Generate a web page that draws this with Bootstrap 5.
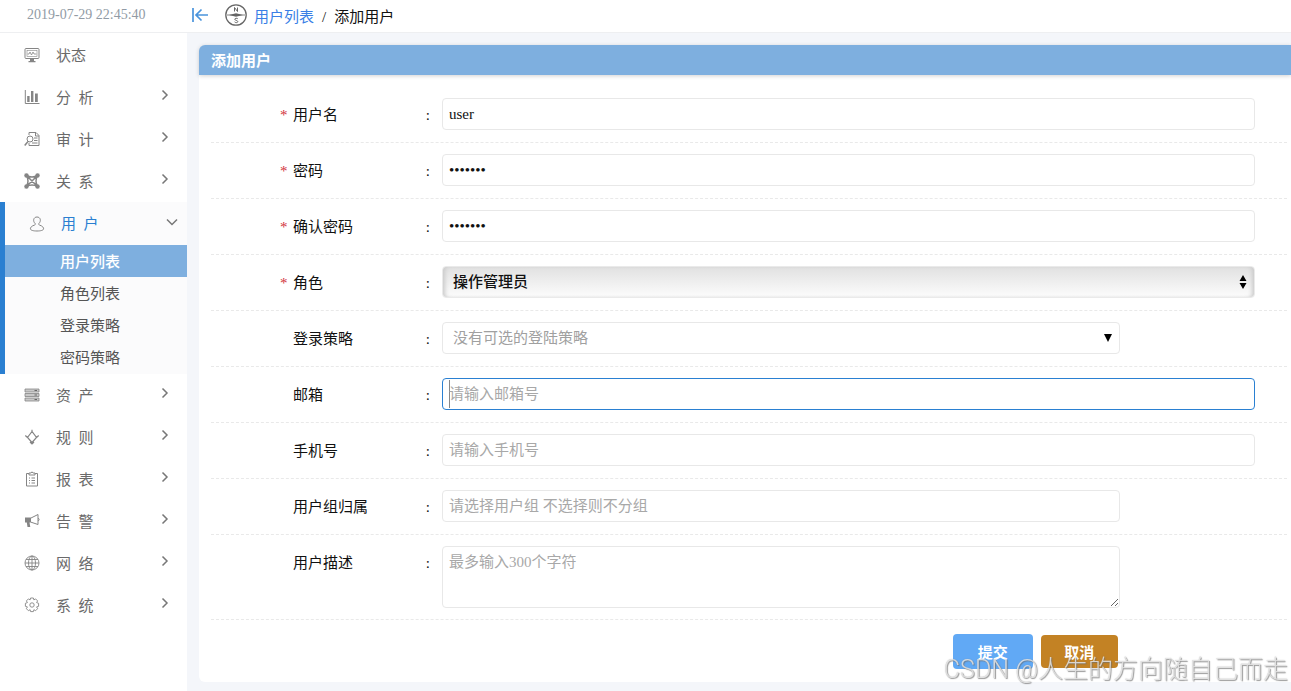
<!DOCTYPE html>
<html lang="zh-CN">
<head>
<meta charset="utf-8">
<meta name="viewport" content="width=device-width, initial-scale=1">
<title>添加用户</title>
<link href="https://cdn.jsdelivr.net/npm/bootstrap@5.3.0/dist/css/bootstrap.min.css" rel="stylesheet">
<style>
  body {
    font-family: "Liberation Serif", "Noto Sans CJK SC", serif;
    font-size: 15px;
    line-height: 20px;
    color: #111;
    background: #f4f6fa;
  }
  a { text-decoration: none; }
  svg { display: block; flex: none; }

  .topbar { height: 33px; border-bottom: 1px solid #eeeff1; }
  .clock { width: 187px; padding: 0 0 3px 27px; font-size: 14px; color: #919ba5; }
  .crumbs { padding: 0 0 2px 5px; }
  .crumbs a { color: #3a7fe6; }
  .crumbs .title { padding: 4px 0 0 7px; }
  .crumbs .collapse-btn { color: #4a94dc; }
  .compass { margin-left: 17px; color: #666; }

  .sidebar { width: 187px; flex: none; padding-top: 1px; color: #666; }
  .menu-link { height: 42px; padding: 0 18px 0 24px; color: #6a6a6a; }
  .menu-link svg { color: #858585; }
  .menu-link .caption { margin-left: 16px; padding-top: 1px; }
  .menu-link .chev { margin: 0 0 4px auto; color: #777; }
  .menu-open { border-left: 5px solid #2a7fd1; background: #fbfbfc; padding-bottom: 1px; }
  .menu-open > .menu-link { height: 43px; padding-right: 9px; }
  .menu-open > .menu-link .caption { color: #2a7fd1; }
  .sub-link { height: 32px; padding: 2px 0 0 55px; color: #555; }
  .sub-link.active { background: #7eafdf; color: #fff; font-weight: 500; }

  .workspace { padding: 12px 0 9px 12px; }
  .panel { border-radius: 6px 0 0 6px; }
  .panel-head {
    height: 30px; padding: 1px 0 0 12px; margin: 0; border-radius: 6px 0 0 0;
    background: #7eafdf; color: #fff; font-weight: 700; font-size: 15px; line-height: 20px;
    box-shadow: 0 1px 4px rgba(0, 0, 0, .18);
  }
  .panel-form { padding: 12px 4px 13px 12px; }
  .form-line { padding: 11px 32px 11px 0; border-bottom: 1px dashed #e9e9e9; min-height: 56px; }
  .form-line > label { width: 231px; height: 32px; flex: none; padding: 1px 12px 0 69px; }
  .star { width: 13px; color: #d2323c; }
  .field { border: 1px solid #e8e8e8; border-radius: 4px; padding: 5px 6px; font-size: 15px; line-height: 20px; color: #111; height: 32px; }
  .field::placeholder { color: #a8a8a8; opacity: 1; }
  .field.editing {
    border-color: #2a80d2;
    background: linear-gradient(#888, #888) 6px 1px / 1px 28px no-repeat #fff;
  }
  .field:focus { box-shadow: none; border-color: #2a80d2; }
  textarea.field { height: 62px; resize: vertical; }
  select.field { background-image: none; padding-left: 10px; }
  select.empty { color: #a0a0a0; }
  select.role {
    font-weight: 500;
    border-color: #eaeaea;
    background: linear-gradient(#e1e1e1, #fcfcfc);
    box-shadow: inset 4px 0 4px -2px #cacaca, inset -4px 0 4px -2px #cacaca;
  }
  .mark-arrow { position: absolute; top: 0; height: 32px; right: 8px; pointer-events: none; }
  .actions { padding: 14px 34px 0 231px; }
  .btn-send, .btn-drop { border: 0; color: #fff; font-size: 15px; font-weight: 700; line-height: 20px; padding: 2px 0 0; border-radius: 4px; }
  .btn-send { background: #61a9f5; width: 80px; height: 35px; }
  .btn-drop { background: #c38224; width: 77px; height: 33px; }
  .watermark {
    position: fixed; right: 3px; bottom: 3px; pointer-events: none; white-space: nowrap;
    font: 300 25px/36px Roboto, "Noto Sans CJK SC", sans-serif;
    color: rgba(235, 235, 235, .8);
    text-shadow: 1px 1px 1px rgba(110, 110, 110, .7), 0 0 1px rgba(130, 130, 130, .5);
  }
</style>
</head>
<body>
<svg class="d-none" aria-hidden="true">
  <symbol id="right" viewBox="0 0 8 12"><path d="M1.500 1.500 6 6l-4.500 4.500" fill="none" stroke="currentColor" stroke-width="1.500"/></symbol>
</svg>
<div class="d-flex flex-column min-vh-100">
  <header class="topbar bg-white d-flex align-items-center">
    <div class="clock">2019-07-29 22:45:40</div>
    <nav class="crumbs d-flex align-items-center" aria-label="breadcrumb">
      <a href="#" class="collapse-btn" aria-label="收起菜单">
        <svg width="16" height="14" viewBox="0 0 16 14" fill="none" stroke="currentColor" stroke-width="1.700"><path d="M1 0v14M16 7H4M9.500 1.500 4 7l5.500 5.500"/></svg>
      </a>
      <svg class="compass" width="22" height="22" viewBox="0 0 22 22" fill="none" stroke="currentColor">
        <circle cx="11" cy="11" r="10.200" stroke-width="1.300"/><path d="m4 11 7-1.800 7 1.800-7 1.800z" fill="currentColor" stroke="none"/><path d="M2 11h18" stroke-width=".8"/>
        <path d="M9.500 7.500V3.500l3 4v-4M12.800 14.800c-.5-.8-3-.8-3 .5s3 1 3 2.300-2.500 1.300-3.200.3" stroke-width="1"/>
      </svg>
      <span class="title"><a href="#">用户列表</a><span class="mx-2">/</span>添加用户</span>
    </nav>
  </header>

  <div class="d-flex flex-grow-1">
    <aside class="sidebar bg-white">
      <a href="#" class="menu-link d-flex align-items-center">
        <svg width="16" height="16" viewBox="0 0 16 16" fill="none" stroke="currentColor"><rect x="1" y="1.500" width="14" height="10" rx="1"/><rect x="3" y="3.500" width="10" height="6" stroke-width=".6"/><path d="M3.500 7H5l1-2 1.500 3L9 5l1 2h2.500" stroke-width=".8"/><path d="M6 12h4v2h1.500v1.200h-7V14H6z" fill="currentColor" stroke="none"/></svg>
        <span class="caption">状态</span>
      </a>
      <a href="#" class="menu-link d-flex align-items-center">
        <svg width="16" height="16" viewBox="0 0 16 16"><path d="M1.300 1v13.500H15.500" fill="none" stroke="currentColor"/><path d="M3.200 7h2.400v6H3.200zM7 2h2.400v11H7zM11 4.500h2.800V13H11z" fill="currentColor"/></svg>
        <span class="caption">分&nbsp; 析</span><svg class="chev" width="8" height="12"><use href="#right"/></svg>
      </a>
      <a href="#" class="menu-link d-flex align-items-center">
        <svg width="16" height="16" viewBox="0 0 16 16" fill="none" stroke="currentColor"><path d="M5 4V1.500h7L15 4.500v10H5V12M11.500 1.500v3.500H15M10 7h3.500M10 9.500h3.500M8 12h5.500"/><circle cx="6" cy="8" r="3"/><path d="m4 10.500-3.300 4" stroke-width="1.500"/></svg>
        <span class="caption">审&nbsp; 计</span><svg class="chev" width="8" height="12"><use href="#right"/></svg>
      </a>
      <a href="#" class="menu-link d-flex align-items-center">
        <svg width="16" height="16" viewBox="0 0 16 16" fill="none" stroke="currentColor" stroke-width="1.500"><path d="m2.500 2.500 11 11m0-11-11 11M2.500 2.500Q8 5.500 13.500 2.500 10.500 8 13.500 13.500 8 10.500 2.500 13.500 5.500 8 2.500 2.500z"/><g fill="currentColor" stroke="none"><circle cx="2.500" cy="2.500" r="2.200"/><circle cx="13.500" cy="2.500" r="2.200"/><circle cx="2.500" cy="13.500" r="2.200"/><circle cx="13.500" cy="13.500" r="2.200"/></g></svg>
        <span class="caption">关&nbsp; 系</span><svg class="chev" width="8" height="12"><use href="#right"/></svg>
      </a>
      <div class="menu-open">
        <a href="#" class="menu-link d-flex align-items-center">
          <svg width="16" height="16" viewBox="0 0 16 16" fill="none" stroke="currentColor"><path d="M6.200 7.600C3.500 5 4.500 1 8 1s4.500 4 1.800 6.600c-.4.700 0 1.200.8 1.500 3 1 4 2.400 4 3.700 0 1.500-3 2.200-6.600 2.200s-6.600-.7-6.600-2.200c0-1.300 1-2.700 4-3.700.8-.3 1.200-.8.800-1.500z"/></svg>
          <span class="caption">用&nbsp; 户</span>
          <svg class="chev" width="12" height="8" viewBox="0 0 12 8" fill="none" stroke="currentColor" stroke-width="1.500"><path d="m1 1.500 5 5 5-5"/></svg>
        </a>
        <a href="#" class="sub-link active d-flex align-items-center">用户列表</a>
        <a href="#" class="sub-link d-flex align-items-center">角色列表</a>
        <a href="#" class="sub-link d-flex align-items-center">登录策略</a>
        <a href="#" class="sub-link d-flex align-items-center">密码策略</a>
      </div>
      <a href="#" class="menu-link d-flex align-items-center">
        <svg width="16" height="16" viewBox="0 0 16 16"><g fill="#c8c8c8" stroke="currentColor" stroke-width=".8"><path d="M1 2h14v3H1zM1 6.500h14v3H1zM1 11h14v3H1z"/></g><path d="M10.500 3H13v1h-2.500zM10.500 7.500H13v1h-2.500zM10.500 12H13v1h-2.500z" fill="#666"/></svg>
        <span class="caption">资&nbsp; 产</span><svg class="chev" width="8" height="12"><use href="#right"/></svg>
      </a>
      <a href="#" class="menu-link d-flex align-items-center">
        <svg width="16" height="16" viewBox="0 0 16 16" fill="none" stroke="currentColor" stroke-width="1.200"><path d="M8 .8V3M8 2.500 3.500 8.500 8 13.500l4.500-5zM1.300 6.500l2.200 2M14.700 6.500l-2.200 2M6 13l2 2 2-2"/></svg>
        <span class="caption">规&nbsp; 则</span><svg class="chev" width="8" height="12"><use href="#right"/></svg>
      </a>
      <a href="#" class="menu-link d-flex align-items-center">
        <svg width="16" height="16" viewBox="0 0 16 16" fill="none" stroke="currentColor"><path d="M5 2.500H2.500v12.500h11V2.500H11M5 4V2h2L8 .8 9 2h2v2zM5 7h1M7.500 7H11M5 9.500h1M7.500 9.500H11M5 12h1M7.500 12H11"/></svg>
        <span class="caption">报&nbsp; 表</span><svg class="chev" width="8" height="12"><use href="#right"/></svg>
      </a>
      <a href="#" class="menu-link d-flex align-items-center">
        <svg width="16" height="16" viewBox="0 0 16 16"><path d="M1 4.500h6v5H5.500l.8 4.500H3.500L2.800 9.500H1z" fill="currentColor"/><path d="m7 5 7-3.500v10L7 9.200M14 5.300c1.500 0 1.500 2.500 0 2.500" fill="none" stroke="currentColor"/></svg>
        <span class="caption">告&nbsp; 警</span><svg class="chev" width="8" height="12"><use href="#right"/></svg>
      </a>
      <a href="#" class="menu-link d-flex align-items-center">
        <svg width="16" height="16" viewBox="0 0 16 16" fill="none" stroke="currentColor" stroke-width=".9"><circle cx="8" cy="8" r="7"/><ellipse cx="8" cy="8" rx="3.500" ry="7"/><path d="M8 1v14M1 8h14M2 4.500h12M2 11.500h12"/></svg>
        <span class="caption">网&nbsp; 络</span><svg class="chev" width="8" height="12"><use href="#right"/></svg>
      </a>
      <a href="#" class="menu-link d-flex align-items-center">
        <svg width="16" height="16" viewBox="0 0 16 16" fill="none" stroke="currentColor" stroke-width=".9"><circle cx="8" cy="8" r="2.200"/><path d="M6.600 1h2.800l.5 1.900 1.700-1 2 2-1 1.700 2 .7v3l-2 .6 1 1.800-2 2-1.700-1-.5 1.900H6.600l-.5-1.900-1.700 1-2-2 1-1.800-2-.6v-3l2-.7-1-1.700 2-2 1.700 1z" stroke-linejoin="round"/></svg>
        <span class="caption">系&nbsp; 统</span><svg class="chev" width="8" height="12"><use href="#right"/></svg>
      </a>
    </aside>

    <main class="workspace flex-grow-1">
      <section class="panel bg-white">
        <h1 class="panel-head d-flex align-items-center">添加用户</h1>
        <form class="panel-form">
          <div class="form-line d-flex">
            <label for="name" class="d-flex align-items-center"><span class="star">*</span>用户名<span class="ms-auto">:</span></label>
            <input id="name" class="form-control field" type="text" value="user">
          </div>
          <div class="form-line d-flex">
            <label for="pwd" class="d-flex align-items-center"><span class="star">*</span>密码<span class="ms-auto">:</span></label>
            <input id="pwd" class="form-control field" type="password" value="user123">
          </div>
          <div class="form-line d-flex">
            <label for="pwd2" class="d-flex align-items-center"><span class="star">*</span>确认密码<span class="ms-auto">:</span></label>
            <input id="pwd2" class="form-control field" type="password" value="user123">
          </div>
          <div class="form-line d-flex">
            <label for="role" class="d-flex align-items-center"><span class="star">*</span>角色<span class="ms-auto">:</span></label>
            <div class="position-relative flex-grow-1">
              <select id="role" class="form-select field role"><option>操作管理员</option></select>
              <svg class="mark-arrow" width="8" height="32" viewBox="0 0 8 32"><path d="m4 9 3.500 6h-7zM4 23l3.500-6h-7z"/></svg>
            </div>
          </div>
          <div class="form-line d-flex">
            <label for="policy" class="d-flex align-items-center"><span class="star"></span>登录策略<span class="ms-auto">:</span></label>
            <div class="flex-grow-1">
              <div class="col-10 position-relative">
                <select id="policy" class="form-select field empty"><option>没有可选的登陆策略</option></select>
                <svg class="mark-arrow" width="8" height="32" viewBox="0 0 8 32"><path d="M0 12h8l-4 8z"/></svg>
              </div>
            </div>
          </div>
          <div class="form-line d-flex">
            <label for="mail" class="d-flex align-items-center"><span class="star"></span>邮箱<span class="ms-auto">:</span></label>
            <input id="mail" class="form-control field editing" type="email" placeholder="请输入邮箱号">
          </div>
          <div class="form-line d-flex">
            <label for="phone" class="d-flex align-items-center"><span class="star"></span>手机号<span class="ms-auto">:</span></label>
            <input id="phone" class="form-control field" type="tel" placeholder="请输入手机号">
          </div>
          <div class="form-line d-flex">
            <label for="group" class="d-flex align-items-center"><span class="star"></span>用户组归属<span class="ms-auto">:</span></label>
            <div class="flex-grow-1"><div class="col-10"><input id="group" class="form-control field" type="text" placeholder="请选择用户组 不选择则不分组"></div></div>
          </div>
          <div class="form-line d-flex">
            <label for="desc" class="d-flex align-items-center"><span class="star"></span>用户描述<span class="ms-auto">:</span></label>
            <div class="flex-grow-1"><div class="col-10"><textarea id="desc" class="form-control field" placeholder="最多输入300个字符"></textarea></div></div>
          </div>
          <div class="actions">
            <div class="col-10 d-flex justify-content-end align-items-center gap-2">
              <button type="submit" class="btn btn-send">提交</button>
              <button type="button" class="btn btn-drop">取消</button>
            </div>
          </div>
        </form>
      </section>
    </main>
  </div>
</div>
<div class="watermark">CSDN @人生的方向随自己而走</div>
<script src="https://cdn.jsdelivr.net/npm/bootstrap@5.3.0/dist/js/bootstrap.bundle.min.js"></script>
</body>
</html>
